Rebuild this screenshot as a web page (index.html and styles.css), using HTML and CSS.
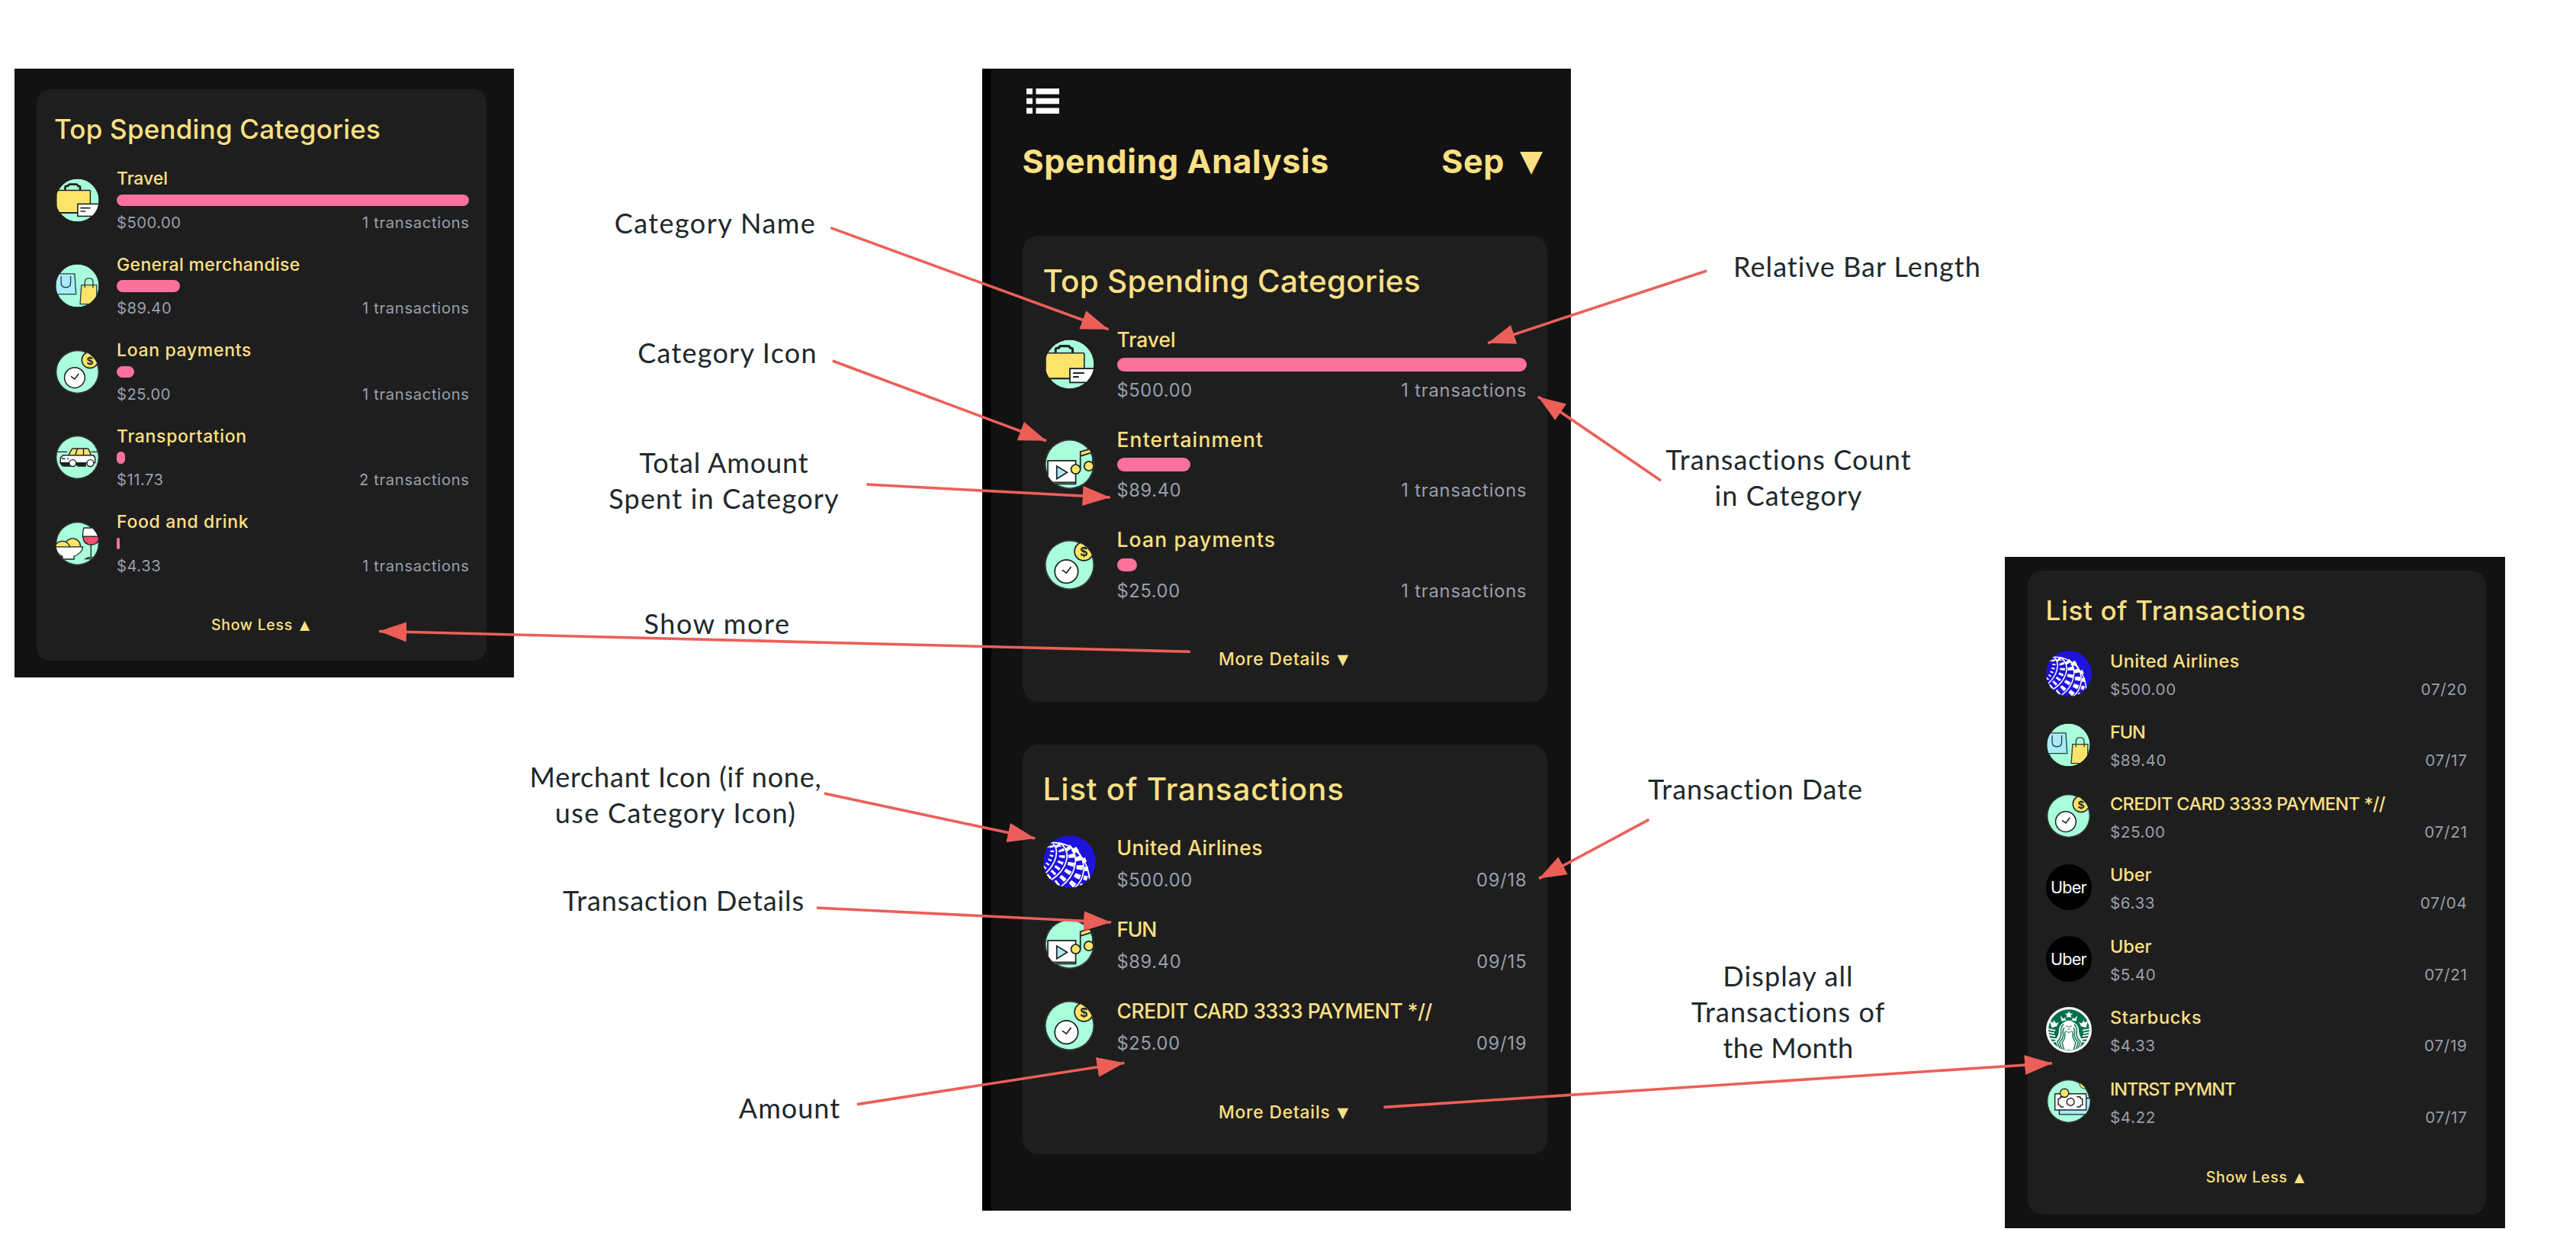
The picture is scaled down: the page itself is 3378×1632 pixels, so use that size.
FILE: index.html
```html
<!DOCTYPE html>
<html lang="en">
<head>
<meta charset="utf-8">
<title>Spending Analysis</title>
<link rel="stylesheet" href="styles.css">
</head>
<body>
<svg class="defs" aria-hidden="true">
  <defs>
    <clipPath id="disc"><circle cx="32" cy="32" r="31.5"/></clipPath>
    <clipPath id="full"><circle cx="32" cy="32" r="32"/></clipPath>
    <clipPath id="siren"><circle cx="32" cy="32" r="28.8"/></clipPath>
    <marker id="head" viewBox="0 0 36 26" markerWidth="36" markerHeight="26" refX="36" refY="13" orient="auto" markerUnits="userSpaceOnUse"><path d="M0 0L36 13L0 26z" fill="#ec5f59"/></marker>
  </defs>

  <symbol id="travel" viewBox="0 0 64 64">
    <g clip-path="url(#disc)">
      <circle cx="32" cy="32" r="31.5" fill="#a9fedc"/>
      <path d="M14 18v-5q0-2 2-2h2q1-2.500 3-2.500h9q2 0 3 2.500h1q2 0 2 2v5" fill="none" stroke="#1b2322" stroke-width="3"/>
      <rect x="1" y="17.500" width="50" height="33" rx="1" fill="#fbe469" stroke="#1b2322" stroke-width="1.600"/>
      <path d="M1 50.500h32" stroke="#1b2322" stroke-width="2"/>
      <rect x="32.500" y="37.500" width="33" height="18" fill="#fff" stroke="#1b2322" stroke-width="1.800"/>
      <path d="M36.500 43.300h14.500M36.500 48.300h7.500" stroke="#1b2322" stroke-width="1.900"/>
    </g>
  </symbol>

  <symbol id="merch" viewBox="0 0 64 64">
    <g clip-path="url(#disc)" stroke="#26403d" stroke-width="1.500" fill="none">
      <circle cx="32" cy="32" r="31.500" fill="#a9fedc" stroke="none"/>
      <path d="M0 14.500h28l2 30H0z" fill="#a9ebfa"/>
      <path d="M8 18v9.500q0 7 7 7t7-7V18"/>
      <path d="M38 31h22.500l-.5 28H36z" fill="#fbe469"/>
      <path d="M43 35v-8q0-6 6-6t6 6v8"/>
    </g>
  </symbol>

  <symbol id="loan" viewBox="0 0 64 64">
    <circle cx="32" cy="32" r="31.500" fill="none" stroke="#39453f" stroke-width="1"/>
    <g clip-path="url(#disc)" stroke="#1b2322" stroke-width="1.700">
      <circle cx="32" cy="32" r="30.500" fill="#a9fedc" stroke="none"/>
      <circle cx="50.500" cy="14.500" r="12" fill="#fbe469"/>
      <circle cx="28" cy="40.500" r="15" fill="#fff"/>
      <path d="M22.500 38.500l5.500 4 6-8" fill="none"/>
    </g>
  </symbol>

  <symbol id="fun" viewBox="0 0 64 64">
    <circle cx="32" cy="32" r="31.500" fill="none" stroke="#39453f" stroke-width="1"/>
    <g clip-path="url(#disc)" stroke="#1b2322" stroke-width="1.700">
      <circle cx="32" cy="32" r="30.500" fill="#a9fedc" stroke="none"/>
      <path d="M4 27.500h36v30H4z" fill="#fff"/>
      <path d="M4 55.500h36" />
      <path d="M15.500 34.500v16.500L29 42.500z" fill="#a9ebfa"/>
      <path d="M46 38V16l16-4.500v5L46 21.500" fill="#fbe469"/>
      <path d="M62 12v22" />
      <circle cx="40" cy="38.500" r="6" fill="#fbe469"/>
      <circle cx="57" cy="34.500" r="6" fill="#fbe469"/>
    </g>
  </symbol>

  <symbol id="car" viewBox="0 0 64 64">
    <circle cx="32" cy="32" r="31.500" fill="none" stroke="#39453f" stroke-width="1"/>
    <g clip-path="url(#disc)" stroke="#1b2322" stroke-width="1.600">
      <circle cx="32" cy="32" r="30.500" fill="#a9fedc" stroke="none"/>
      <path d="M0 24h17M52 24h12"/>
      <path d="M7 40h14v5h-8q-4 0-6-5zM30 40h14v5H34q-3 0-4-5z" fill="#1b2322"/>
      <path d="M19 29l4-8q1-2 3-2h20q2.500 0 3 2l3 8z" fill="#fbe469"/>
      <path d="M32 19l-3 10M41 19v10"/>
      <path d="M7 40v-7l4-4h42q5 0 5 5v6z" fill="#fff"/>
      <path d="M9 34h5M17 34h2"/>
      <circle cx="25" cy="40.500" r="5" fill="#fff"/>
      <circle cx="51" cy="40.500" r="5" fill="#fff"/>
    </g>
  </symbol>

  <symbol id="food" viewBox="0 0 64 64">
    <circle cx="32" cy="32" r="31.500" fill="none" stroke="#39453f" stroke-width="1"/>
    <g clip-path="url(#disc)" stroke="#1b2322" stroke-width="1.500">
      <circle cx="32" cy="32" r="30.500" fill="#a9fedc" stroke="none"/>
      <circle cx="25" cy="36" r="11.500" fill="#fbe469"/>
      <circle cx="10" cy="40" r="11.500" fill="#fbe469"/>
      <path d="M0 37h40q-1 9-13 14v4H10v-4Q1 47 0 37z" fill="#fff"/>
      <path d="M41.500 9h22l1 13H40q-.5-7 1.500-13z" fill="#fff"/>
      <path d="M40 21.500h24q0 12-12 12.500-11.500-1-12-12.500z" fill="#f94f6d"/>
      <path d="M52 34v18m-8 2.500q8-5 14 0z" fill="#fff"/>
    </g>
  </symbol>

  <symbol id="interest" viewBox="0 0 64 64">
    <circle cx="32" cy="32" r="31.500" fill="none" stroke="#39453f" stroke-width="1"/>
    <g clip-path="url(#disc)" stroke="#1b2322" stroke-width="1.600" fill="none">
      <circle cx="32" cy="32" r="30.500" fill="#a9fedc" stroke="none"/>
      <path d="M18.500 27.500H66v24H18.500z" fill="#a9ebfa"/>
      <path d="M12 21h46v24H12z" fill="#fff"/>
      <circle cx="35" cy="33" r="5.500"/>
      <path d="M25 25.500h-4.500q0 3-3.500 3v9q3.500 0 3.500 3H25M44 25.500h5q0 3 3.500 3v9q-3.500 0-3.500 3h-5"/>
      <circle cx="26" cy="20" r="6.300" fill="#fbe469"/>
      <circle cx="55.500" cy="6.500" r="7" fill="#fbe469" stroke-width="1"/>
    </g>
  </symbol>

  <symbol id="united" viewBox="0 0 64 64">
    <g clip-path="url(#full)" fill="none" stroke="#fff">
      <circle cx="32" cy="32" r="32" fill="#1f12dc" stroke="none"/>
      <g stroke-width="1.600">
        <path d="M9 9C36 7 54 28 56.500 54"/>
        <path d="M12 10C20 18 16 34 3 46"/>
        <path d="M21 9.500C36 22 28 42 10 54"/>
        <path d="M32 12C46 28 38 50 22 62"/>
        <path d="M42 19C54 36 50 54 38 64"/>
        <path d="M4 15Q12 11 22 13.500" stroke-width="1.200"/>
      </g>
      <path d="M10 13C13 20 9 32 1 40" stroke-width="4.500" stroke-dasharray="2 3.500"/>
      <path d="M17 11C29 22 22 38 6 51" stroke-width="7" stroke-dasharray="3 4.500"/>
      <path d="M27 12C42 26 33 47 16 59" stroke-width="8" stroke-dasharray="4.500 5.500" stroke-dashoffset="-3"/>
      <path d="M37 16C50 32 45 53 30 64" stroke-width="7.500" stroke-dasharray="5.500 5.500"/>
      <path d="M47 24C56 40 53 54 46 62" stroke-width="4.500" stroke-dasharray="5.500 5.500" stroke-dashoffset="-4"/>
    </g>
  </symbol>

  <symbol id="uber" viewBox="0 0 64 64"><circle cx="32" cy="32" r="32" fill="#000"/></symbol>

  <symbol id="starbucks" viewBox="0 0 64 64">
    <circle cx="32" cy="32" r="32" fill="#fff"/>
    <g clip-path="url(#siren)">
      <circle cx="32" cy="32" r="28.800" fill="#00704a"/>
      <path d="M32 5.500l1.500 3.500 4 .2-3 2.500 1 3.800-3.500-2-3.500 2 1-3.800-3-2.500 4-.2z" fill="#fff"/>
      <path d="M20 12l4 4.500 2.500-1.500 1.500 3h8l1.500-3 2.500 1.500 4-4.500-2 8q-10-4-20 0z" fill="#fff"/>
      <path d="M5 19l5 3 1-4 3 5 4-2-3 6-7 2zM59 19l-5 3-1-4-3 5-4-2 3 6 7 2z" fill="#fff"/>
      <path d="M3 31l10 2M3 35l9 2M4 39l9 2M5 44l9 1M8 49l8-1M61 31l-10 2M61 35l-9 2M60 39l-9 2M59 44l-9 1M56 49l-8-1" stroke="#fff" stroke-width="2"/>
      <path d="M24 22Q18 26 18 33T13 46Q15 54 19 60H45Q49 54 51 46Q46 40 46 33T40 22Q32 16 24 22z" fill="#fff"/>
      <g fill="none" stroke="#00704a" stroke-width="1.500">
        <path d="M24.500 24Q20 29 21 36T16 48Q17 54 20 59"/>
        <path d="M25.500 29Q23 33 24 38T19 49Q20 55 23 61"/>
        <path d="M27 34Q26 37 26.500 40T22.500 50Q24 56 26 62"/>
        <path d="M39.500 24Q44 29 43 36T48 48Q47 54 44 59"/>
        <path d="M38.500 29Q41 33 40 38T45 49Q44 55 41 61"/>
        <path d="M37 34Q38 37 37.500 40T41.500 50Q40 56 38 62"/>
        <path d="M27.500 33.500Q32 37.500 36.500 33.500M28 27h2.800M33.200 27H36M32 27v2.500M30.500 31.200h3" stroke-width="1"/>
      </g>
    </g>
  </symbol>
</svg>

<main class="board">
  <section class="panel panel-left">
    <article class="card">
      <h2 class="title">Top Spending Categories</h2>
      <ul class="rows">
        <li class="row"><svg class="icon"><use href="#travel"/></svg><div class="info"><div class="name k-tight">Travel</div><div class="bar" style="width:100%"></div><div class="meta"><span>$500.00</span><span>1 transactions</span></div></div></li>
        <li class="row"><svg class="icon"><use href="#merch"/></svg><div class="info"><div class="name k-mid">General merchandise</div><div class="bar" style="width:17.88%"></div><div class="meta"><span>$89.40</span><span>1 transactions</span></div></div></li>
        <li class="row"><svg class="icon" viewBox="0 0 64 64"><use href="#loan"/><text x="50.500" y="20.800" class="coin">$</text></svg><div class="info"><div class="name">Loan payments</div><div class="bar" style="width:5%"></div><div class="meta"><span>$25.00</span><span>1 transactions</span></div></div></li>
        <li class="row"><svg class="icon"><use href="#car"/></svg><div class="info"><div class="name">Transportation</div><div class="bar" style="width:2.35%"></div><div class="meta"><span>$11.73</span><span>2 transactions</span></div></div></li>
        <li class="row"><svg class="icon"><use href="#food"/></svg><div class="info"><div class="name">Food and drink</div><div class="bar" style="width:.87%"></div><div class="meta"><span>$4.33</span><span>1 transactions</span></div></div></li>
      </ul>
      <div class="more"><span>Show Less</span><span class="tri">▲</span></div>
    </article>
  </section>

  <section class="panel panel-main">
    <svg class="menu" viewBox="0 0 43 33"><path d="M0 0h8v7.500H0zM12.500 0H43v7.500H12.500zM0 12.700h8v7.600H0zM12.500 12.700H43v7.600H12.500zM0 25.500h8V33H0zM12.500 25.500H43V33H12.500z" fill="#fff"/></svg>
    <header class="head"><h1>Spending Analysis</h1><div class="month"><span>Sep</span><span class="tri">▼</span></div></header>
    <article class="card">
      <h2 class="title">Top Spending Categories</h2>
      <ul class="rows">
        <li class="row"><svg class="icon"><use href="#travel"/></svg><div class="info"><div class="name k-tight">Travel</div><div class="bar" style="width:100%"></div><div class="meta"><span>$500.00</span><span>1 transactions</span></div></div></li>
        <li class="row"><svg class="icon"><use href="#fun"/></svg><div class="info"><div class="name k-wide">Entertainment</div><div class="bar" style="width:17.88%"></div><div class="meta"><span>$89.40</span><span>1 transactions</span></div></div></li>
        <li class="row"><svg class="icon" viewBox="0 0 64 64"><use href="#loan"/><text x="50.500" y="20.800" class="coin">$</text></svg><div class="info"><div class="name k-wide">Loan payments</div><div class="bar" style="width:5%"></div><div class="meta"><span>$25.00</span><span>1 transactions</span></div></div></li>
      </ul>
      <div class="more"><span>More Details</span><span class="tri">▼</span></div>
    </article>
    <article class="card list">
      <h2 class="title k-list">List of Transactions</h2>
      <ul class="rows">
        <li class="row"><svg class="icon logo"><use href="#united"/></svg><div class="info"><div class="name k-mid">United Airlines</div><div class="meta"><span>$500.00</span><span>09/18</span></div></div></li>
        <li class="row"><svg class="icon"><use href="#fun"/></svg><div class="info"><div class="name k-narrow">FUN</div><div class="meta"><span>$89.40</span><span>09/15</span></div></div></li>
        <li class="row"><svg class="icon" viewBox="0 0 64 64"><use href="#loan"/><text x="50.500" y="20.800" class="coin">$</text></svg><div class="info"><div class="name k-caps">CREDIT CARD 3333 PAYMENT *//</div><div class="meta"><span>$25.00</span><span>09/19</span></div></div></li>
      </ul>
      <div class="more"><span>More Details</span><span class="tri">▼</span></div>
    </article>
  </section>

  <section class="panel panel-right">
    <article class="card list">
      <h2 class="title k-list">List of Transactions</h2>
      <ul class="rows">
        <li class="row"><svg class="icon logo"><use href="#united"/></svg><div class="info"><div class="name k-mid">United Airlines</div><div class="meta"><span>$500.00</span><span>07/20</span></div></div></li>
        <li class="row"><svg class="icon"><use href="#merch"/></svg><div class="info"><div class="name k-narrow">FUN</div><div class="meta"><span>$89.40</span><span>07/17</span></div></div></li>
        <li class="row"><svg class="icon" viewBox="0 0 64 64"><use href="#loan"/><text x="50.500" y="20.800" class="coin">$</text></svg><div class="info"><div class="name k-caps">CREDIT CARD 3333 PAYMENT *//</div><div class="meta"><span>$25.00</span><span>07/21</span></div></div></li>
        <li class="row"><svg class="icon logo" viewBox="0 0 64 64"><use href="#uber"/><text x="31.500" y="40" class="uber">Uber</text></svg><div class="info"><div class="name k-tight">Uber</div><div class="meta"><span>$6.33</span><span>07/04</span></div></div></li>
        <li class="row"><svg class="icon logo" viewBox="0 0 64 64"><use href="#uber"/><text x="31.500" y="40" class="uber">Uber</text></svg><div class="info"><div class="name k-tight">Uber</div><div class="meta"><span>$5.40</span><span>07/21</span></div></div></li>
        <li class="row"><svg class="icon logo"><use href="#starbucks"/></svg><div class="info"><div class="name">Starbucks</div><div class="meta"><span>$4.33</span><span>07/19</span></div></div></li>
        <li class="row"><svg class="icon"><use href="#interest"/></svg><div class="info"><div class="name k-narrow">INTRST PYMNT</div><div class="meta"><span>$4.22</span><span>07/17</span></div></div></li>
      </ul>
      <div class="more"><span>Show Less</span><span class="tri">▲</span></div>
    </article>
  </section>

  <!-- callouts pinned on the board -->
  <p class="note n-name">Category Name</p>
  <p class="note n-icon">Category Icon</p>
  <p class="note n-total"><span>Total Amount</span><br>Spent in Category</p>
  <p class="note n-show">Show more</p>
  <p class="note n-merchant"><span>Merchant Icon (if none,</span><br>use Category Icon)</p>
  <p class="note n-details">Transaction Details</p>
  <p class="note n-amount">Amount</p>
  <p class="note n-bar">Relative Bar Length</p>
  <p class="note n-count">Transactions Count<br>in Category</p>
  <p class="note n-date">Transaction Date</p>
  <p class="note n-all">Display all<br>Transactions of<br><span>the Month</span></p>

  <svg class="arrows" viewBox="0 0 3378 1632">
    <path d="M1089.400 298.600L1453.600 431.700"/>
    <path d="M1091.800 473L1372 577.700"/>
    <path d="M1136.300 635L1455.700 652"/>
    <path d="M1560.800 854.300L497 827.500"/>
    <path d="M1080.800 1040L1357.300 1099"/>
    <path d="M1071 1190L1457 1209"/>
    <path d="M1124 1447.600L1474.500 1393.300"/>
    <path d="M2238 355L1951 449.700"/>
    <path d="M2178 630L2017 520"/>
    <path d="M2162.300 1074.300L2018 1151.700"/>
    <path d="M1814.500 1451.400L2691 1393.700"/>
  </svg>
</main>
</body>
</html>
```
FILE: styles.css
```css
* { box-sizing: border-box; }
body { margin: 0; background: #fff; }
h1, h2, p, ul { margin: 0; padding: 0; font-weight: inherit; }
ul { list-style: none; }
.defs { position: absolute; width: 0; height: 0; }

.board {
  position: relative;
  width: 3378px;
  height: 1632px;
  overflow: hidden;
  font-family: Inter, "Liberation Sans", sans-serif;
  font-weight: 500;
  color: #fde084;
}

/* panels are free-standing windows on the board */
.panel { position: absolute; background: #121212; }
.panel-left {
  --title: 35px; --title-lh: 44px; --title-gap: 29.6px;
  --name: 23px; --name-lh: 28px;
  --bar: 15.5px; --bar-top: 6.4px; --meta-top: 9.7px;
  --meta: 20.2px; --meta-lh: 24px;
  --row-gap: 28.9px; --slot: 60px; --icon: 57px; --slot-gap: 22px;
  --more: 19.5px; --more-top: 53px; --tri: 17px;
  left: 19px; top: 90px; width: 655px; height: 798px;
  padding: 27px 36px 22px 29px;
}
.panel-left .card { padding: 29.8px 23px 0 23px; height: 749px; border-radius: 18px; }
.panel-left .icon { margin: 0 1.500px; }

.panel-main {
  --title: 40.5px; --title-lh: 50px; --title-gap: 34.7px;
  --name: 26.5px; --name-lh: 32px;
  --bar: 17.5px; --bar-top: 8.3px; --meta-top: 11.4px;
  --meta: 23.7px; --meta-lh: 28px;
  --row-gap: 34.15px; --slot: 69px; --icon: 65px; --slot-gap: 28px;
  --more: 22.8px; --more-top: 63.500px; --tri: 19px;
  left: 1288px; top: 90px; width: 772px; height: 1497px;
  padding: 26px 31px 0 40.500px;
  border-left: 12px solid #000;
}
.panel-main .card { padding: 34.8px 27.4px 0 27px; height: 611px; border-radius: 21px; }
.panel-main .list { margin-top: 55.500px; height: 537.5px; padding-top: 34.5px; --meta-top: 13px; --row-gap: 34.2px; --more-top: 63.500px; }

.panel-right {
  --title: 35px; --title-lh: 44px; --title-gap: 30.4px;
  --name: 23.5px; --name-lh: 28px; --meta-top: 11.2px;
  --meta: 20.7px; --meta-lh: 24px;
  --row-gap: 30.35px; --slot: 60px; --icon: 57px; --slot-gap: 24.5px;
  --more: 19.5px; --more-top: 54px; --tri: 17px;
  left: 2629px; top: 730px; width: 655.5px; height: 879.5px;
  padding: 17.700px 25px 0 30px;
}
.panel-right .card { padding: 30.5px 24.6px 0 23.5px; height: 844.3px; border-radius: 19px; }

.menu { display: block; width: 43px; height: 33px; margin-left: 5px; }
.head { display: flex; justify-content: space-between; align-items: center; height: 60px; margin-top: 32px; margin-bottom: 68.300px; padding-right: 6px; font-size: 43px; line-height: 60px; font-weight: 700; letter-spacing: .014em; }
.month { display: flex; gap: 20px; }
.head h1 { font-size: inherit; }
.head .tri { font-size: 39px; font-weight: 400; }

.card { background: #1e1e1e; }
.title { font-size: var(--title); line-height: var(--title-lh); letter-spacing: .006em; }
.k-list { letter-spacing: .019em; }
.rows { display: flex; flex-direction: column; gap: var(--row-gap); margin-top: var(--title-gap); }
.row { display: flex; align-items: center; gap: var(--slot-gap); }
.icon { flex: none; width: var(--icon); height: var(--icon); margin: 0 calc((var(--slot) - var(--icon)) / 2); overflow: visible; }
.icon.logo { width: var(--slot); height: var(--slot); margin: -6px 0; }
.list .icon { position: relative; top: -1.500px; }
.info { flex: 1; min-width: 0; }
.name { font-size: var(--name); line-height: var(--name-lh); letter-spacing: .029em; white-space: nowrap; }
.bar { height: var(--bar); margin-top: var(--bar-top); border-radius: 9px; background: #f9719c; }
.meta { display: flex; justify-content: space-between; margin-top: var(--meta-top); font-size: var(--meta); line-height: var(--meta-lh); font-weight: 400; letter-spacing: .034em; color: #999eab; }
.meta span:first-child { letter-spacing: .026em; }
.meta span:last-child { margin-right: -.034em; }
.more { display: flex; justify-content: center; align-items: center; gap: 9px; height: 26px; margin-top: calc(var(--more-top) - 1px); padding-right: 3px; font-size: var(--more); line-height: 26px; letter-spacing: .036em; }
.tri { font-family: "DejaVu Sans", sans-serif; font-size: var(--tri); letter-spacing: 0; }

.k-tight { letter-spacing: -.003em; }
.k-mid { letter-spacing: .015em; }
.k-wide { letter-spacing: .043em; }
.k-caps { letter-spacing: -.017em; }
.panel-right .k-caps { letter-spacing: -.026em; }
.k-narrow { letter-spacing: -.048em; }

.coin { font: 700 17px "Liberation Sans", sans-serif; letter-spacing: 0; text-anchor: middle; fill: #1b2322; }
.uber { font: 400 23px Inter, sans-serif; letter-spacing: -.8px; text-anchor: middle; fill: #fff; }

.note {
  position: absolute;
  transform: translateX(-50%);
  margin-top: 1px;
  font: 400 36px/47px Lato, sans-serif;
  letter-spacing: 1.05px;
  text-align: center;
  white-space: nowrap;
  color: #20282b;
}
.n-name { left: 938px; top: 267.500px; letter-spacing: 1.45px; }
.n-icon { left: 954px; top: 437.500px; letter-spacing: 1.25px; }
.n-total { left: 949.500px; top: 581.500px; letter-spacing: 1.2px; }
.n-total span { letter-spacing: .9px; }
.n-show { left: 940.500px; top: 793px; letter-spacing: 1.6px; }
.n-merchant { left: 886px; top: 993.500px; letter-spacing: 1.35px; }
.n-merchant span { letter-spacing: .8px; }
.n-details { left: 896.500px; top: 1155.500px; letter-spacing: .92px; }
.n-amount { left: 1035.500px; top: 1427.500px; }
.n-bar { left: 2435.500px; top: 325px; }
.n-count { left: 2345.500px; top: 578px; letter-spacing: 1.1px; }
.n-date { left: 2302px; top: 1009.500px; letter-spacing: .96px; }
.n-all { left: 2345px; top: 1255px; letter-spacing: 1.1px; }
.n-all span { letter-spacing: .43px; }

.arrows { position: absolute; inset: 0; width: 3378px; height: 1632px; fill: none; stroke: #ec5f59; stroke-width: 3.600; }
.arrows path { marker-end: url(#head); }
```
